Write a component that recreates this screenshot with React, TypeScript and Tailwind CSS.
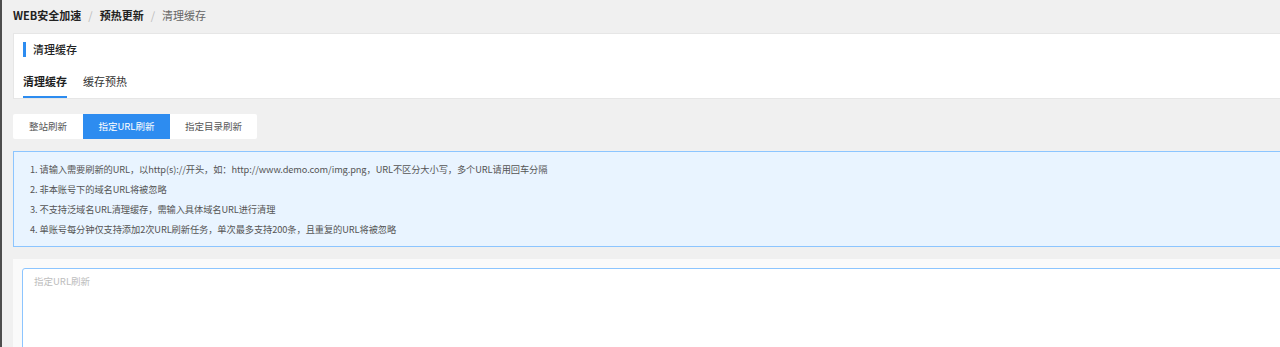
const tips = [
  '1. 请输入需要刷新的URL，以http(s)://开头，如：http://www.demo.com/img.png，URL不区分大小写，多个URL请用回车分隔',
  '2. 非本账号下的域名URL将被忽略',
  '3. 不支持泛域名URL清理缓存，需输入具体域名URL进行清理',
  '4. 单账号每分钟仅支持添加2次URL刷新任务，单次最多支持200条，且重复的URL将被忽略',
]

const modes = ['整站刷新', '指定URL刷新', '指定目录刷新']

export default function App() {
  const active = 1

  return (
    <div
      className="w-[1280px] h-[347px] overflow-hidden flex bg-[#f0f0f0] text-[#333]"
      style={{ fontFamily: '"Noto Sans CJK SC", "Noto Sans", sans-serif' }}
    >
      {/* left edge */}
      <div className="w-[2px] shrink-0 bg-[#4d4d4d]" />

      <main className="flex-1 pl-[11px] min-w-0">
        {/* Breadcrumb */}
        <div className="h-[33px] flex items-center pb-[3px] text-[11px]">
          <span className="font-bold text-[#222]">WEB安全加速</span>
          <span className="mx-[7px] text-[#bbb]">/</span>
          <span className="font-bold text-[#222]">预热更新</span>
          <span className="mx-[7px] text-[#bbb]">/</span>
          <span className="text-[#666]">清理缓存</span>
        </div>

        {/* Header card */}
        <div className="mr-[-20px] h-[66px] bg-white border border-[#e6e6e6] pl-[9px] flex flex-col">
          <div className="flex items-center mt-[8px] h-[15px]">
            <div className="w-[3px] h-[15px] bg-[#2d8cf0]" />
            <span className="ml-[7px] text-[11px] font-medium text-[#222]">清理缓存</span>
          </div>
          <div className="flex mt-auto text-[11px]">
            <div className="flex flex-col items-center">
              <span className="font-bold text-[#1f1f1f] leading-[14px]">清理缓存</span>
              <div className="mt-[8px] h-[2px] w-full bg-[#2d8cf0]" />
            </div>
            <div className="ml-[16px] flex flex-col items-center">
              <span className="text-[#333] leading-[14px]">缓存预热</span>
              <div className="mt-[8px] h-[2px] w-full" />
            </div>
          </div>
        </div>

        {/* Mode switch */}
        <div className="mt-[15px] flex h-[25px] text-[9.5px]">
          {modes.map((m, i) => (
            <button
              key={m}
              className={
                i === active
                  ? 'h-full w-[87px] bg-[#2d8cf0] text-white'
                  : i === 0
                    ? 'h-full w-[70px] bg-white text-[#555] rounded-l-[2px]'
                    : 'h-full w-[87px] bg-white text-[#555] rounded-r-[2px]'
              }
            >
              {m}
            </button>
          ))}
        </div>

        {/* Tips */}
        <div className="mt-[12px] mr-[-20px] h-[96px] bg-[#e9f4ff] border border-[#8cc5ff] pl-[16px] pt-[7px] text-[9.25px] text-[#555]">
          {tips.map((t) => (
            <div key={t} className="h-[20px] leading-[20px] whitespace-nowrap tracking-[-0.1px]">
              {t}
            </div>
          ))}
        </div>

        {/* URL input */}
        <div className="mt-[12px] mr-[-20px] h-[100px] bg-[#fafafa] pt-[9px] pl-[9px]">
          <textarea
            placeholder="指定URL刷新"
            className="w-full h-[120px] bg-white border border-[#8cc5ff] rounded-[3px] px-[11px] pt-[5px] text-[9.5px] outline-none resize-none placeholder:text-[#bdbdbd]"
          />
        </div>
      </main>
    </div>
  )
}
